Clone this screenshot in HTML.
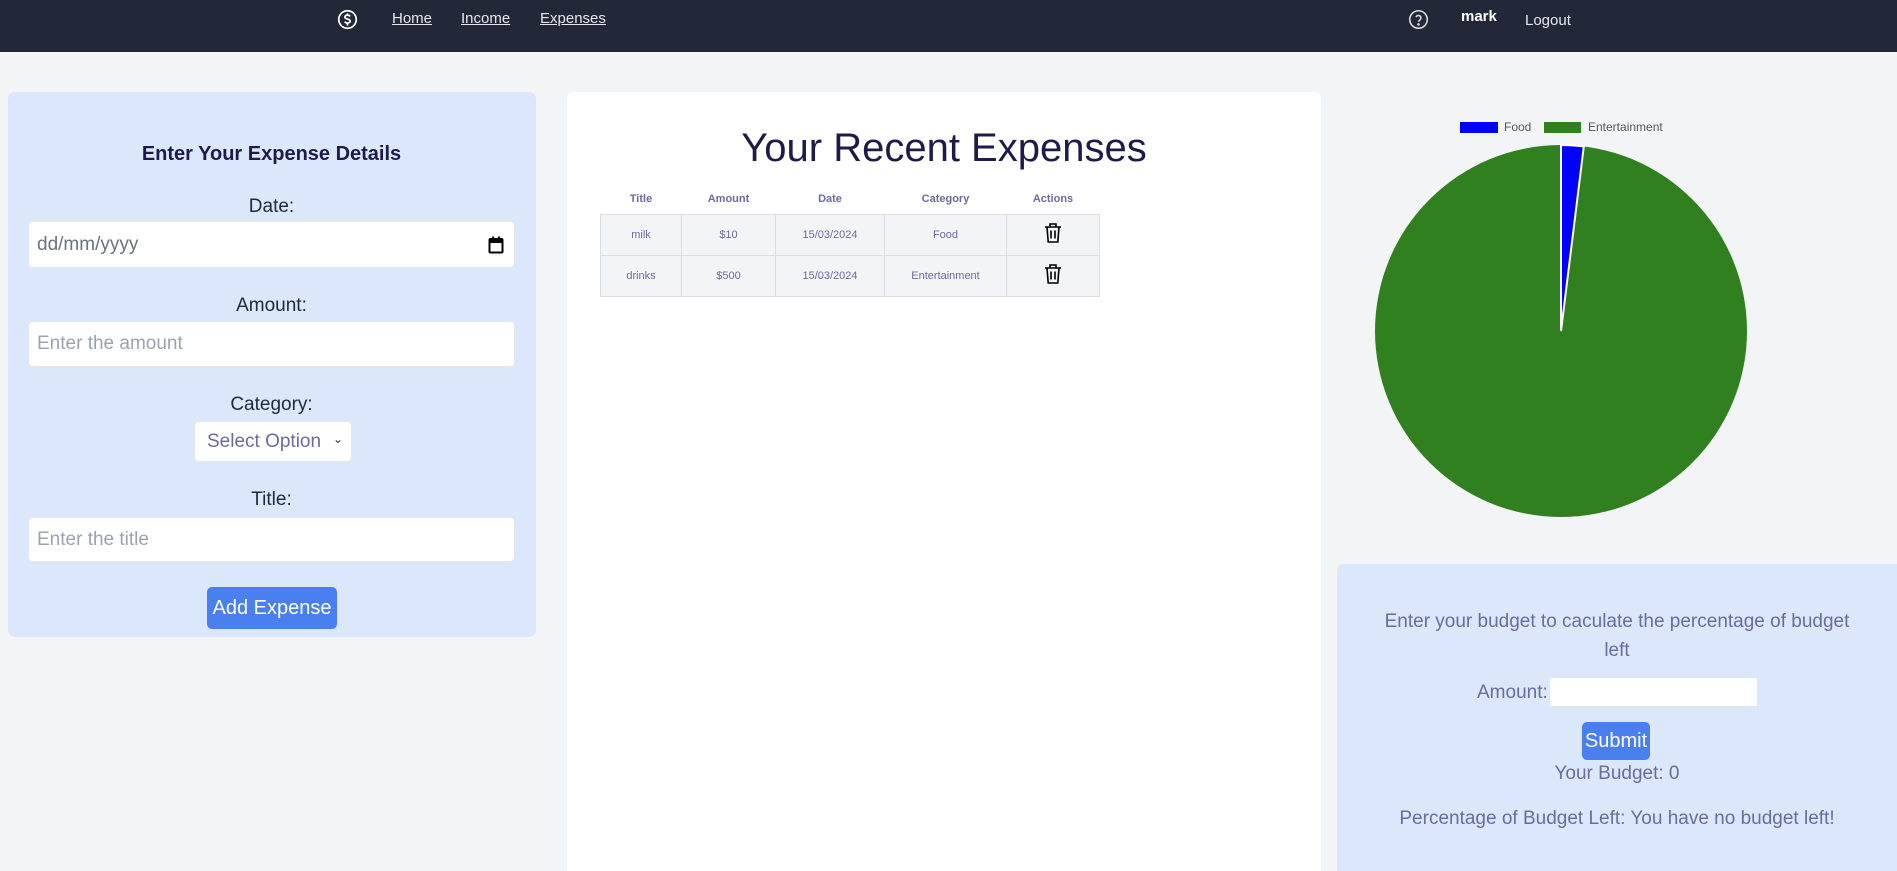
<!DOCTYPE html>
<html><head><meta charset="utf-8"><style>
*{box-sizing:border-box;margin:0;padding:0}
html,body{width:1897px;height:871px;overflow:hidden}
body{background:#f3f4f6;font-family:"Liberation Sans",Arial,sans-serif;position:relative}
.a{position:absolute}
.nav{left:0;top:0;width:1897px;height:52px;background:#222837}
.nl{color:#e5e7eb;font-size:15px;text-decoration:underline;top:10px}
.card{border-radius:7px}
.lbl{width:527px;left:0;text-align:center;font-size:19px;color:#1f2937}
.inp{background:#fff;border:1px solid #e5e7eb;border-radius:5px;font-size:19px;color:#9ca3af;padding-left:8px;display:flex;align-items:center}
th,td{text-align:center;color:#6b6b9e;font-size:11px}
th{font-weight:bold;height:30px}
td{border:1px solid #dcdee3;background:#f3f4f6;height:41px}
.bt{color:#6b6b9e;font-size:19px;text-align:center;width:560px;left:0}
</style></head><body>
<div class="a nav">
<svg class="a" style="left:337px;top:9px" width="21" height="21" viewBox="0 0 24 24" fill="none" stroke="#fff" stroke-width="2"><circle cx="12" cy="12" r="10"/><path d="M15 8.5c-.5-1-1.6-1.5-3-1.5-1.7 0-3 .9-3 2.2 0 3 6 1.6 6 4.6 0 1.3-1.3 2.2-3 2.2-1.5 0-2.6-.6-3.1-1.6M12 5v2M12 17v2"/></svg>
<div class="a nl" style="left:392px">Home</div>
<div class="a nl" style="left:461px">Income</div>
<div class="a nl" style="left:540px">Expenses</div>
<svg class="a" style="left:1408px;top:9px" width="21" height="21" viewBox="0 0 24 24" fill="none" stroke="#ddd" stroke-width="1.8"><circle cx="12" cy="12" r="10"/><path d="M9.2 9.3a2.9 2.9 0 0 1 5.6 1c0 2-2.8 2.6-2.8 4.3"/><circle cx="12" cy="17.6" r=".6" fill="#ddd"/></svg>
<div class="a" style="left:1461px;top:8px;color:#fff;font-size:15px;font-weight:bold">mark</div>
<div class="a" style="left:1525px;top:12px;color:#e5e7eb;font-size:15px">Logout</div>
</div>

<div class="a card" style="left:8px;top:92px;width:528px;height:545px;background:#dbe8fc">
<div class="a lbl" style="top:51px;font-weight:bold;font-size:20px;color:#1e1b4b">Enter Your Expense Details</div>
<div class="a lbl" style="top:104px">Date:</div>
<div class="a inp" style="left:20px;top:129px;width:487px;height:47px;color:#6b7280">dd/mm/yyyy
<svg class="a" style="right:10px;top:14px" width="16" height="18" viewBox="0 0 16 18"><rect x="1.5" y="3" width="13" height="13.5" rx="1" fill="none" stroke="#000" stroke-width="2"/><rect x="1.5" y="3" width="13" height="4" fill="#000"/><rect x="4" y="0.5" width="2" height="3" fill="#000"/><rect x="10" y="0.5" width="2" height="3" fill="#000"/></svg></div>
<div class="a lbl" style="top:203px">Amount:</div>
<div class="a inp" style="left:20px;top:229px;width:487px;height:46px">Enter the amount</div>
<div class="a lbl" style="top:302px">Category:</div>
<div class="a inp" style="left:186px;top:329px;width:158px;height:41px;color:#6b6b9e;padding-left:12px">Select Option<span class="a" style="right:8px;top:10px;font-size:12px;color:#333">&#8964;</span></div>
<div class="a lbl" style="top:397px">Title:</div>
<div class="a inp" style="left:20px;top:425px;width:487px;height:45px">Enter the title</div>
<div class="a" style="left:199px;top:495px;width:130px;height:42px;background:#4a7ff0;border-radius:5px;color:#fff;font-size:20px;display:flex;align-items:center;justify-content:center">Add Expense</div>
</div>

<div class="a card" style="left:567px;top:92px;width:754px;height:790px;background:#fff">
<div class="a" style="left:0;width:754px;top:34px;text-align:center;font-size:40px;color:#1e1b4b">Your Recent Expenses</div>
<table class="a" style="left:33px;top:92px;width:500px;border-collapse:collapse">
<tr><th style="width:81px">Title</th><th style="width:94px">Amount</th><th style="width:109px">Date</th><th style="width:122px">Category</th><th>Actions</th></tr>
<tr><td>milk</td><td>$10</td><td>15/03/2024</td><td>Food</td><td><svg width="20" height="22" viewBox="0 0 20 22" fill="none" stroke="#000" stroke-width="1.6"><path d="M2 5h16M7 5V2h6v3M4 5l1.2 15h9.6L16 5M8 8.5v8M12 8.5v8"/></svg></td></tr>
<tr><td>drinks</td><td>$500</td><td>15/03/2024</td><td>Entertainment</td><td><svg width="20" height="22" viewBox="0 0 20 22" fill="none" stroke="#000" stroke-width="1.6"><path d="M2 5h16M7 5V2h6v3M4 5l1.2 15h9.6L16 5M8 8.5v8M12 8.5v8"/></svg></td></tr>
</table>
</div>

<div class="a" style="left:1460px;top:122px;width:38px;height:11px;background:#0000ff"></div>
<div class="a" style="left:1504px;top:120px;font-size:12px;color:#555">Food</div>
<div class="a" style="left:1544px;top:122px;width:37px;height:11px;background:#318020"></div>
<div class="a" style="left:1588px;top:120px;font-size:12px;color:#555">Entertainment</div>
<svg class="a" style="left:1370px;top:140px" width="382" height="382" viewBox="-191 -191 382 382">
<circle r="186" fill="#318020"/>
<path d="M0 0 L0 -186 A186 186 0 0 1 22.8 -184.6 Z" fill="#0000ff" stroke="#fff" stroke-width="2"/>
</svg>

<div class="a card" style="left:1337px;top:564px;width:570px;height:320px;background:#dbe8fc">
<div class="a bt" style="top:43px;line-height:29px">Enter your budget to caculate the percentage of budget<br>left</div>
<div class="a" style="left:140px;top:118px;color:#6b6b9e;font-size:19px">Amount:</div>
<div class="a" style="left:213px;top:114px;width:207px;height:28px;background:#fff"></div>
<div class="a" style="left:245px;top:158px;width:68px;height:38px;background:#4a7ff0;border-radius:5px;color:#fff;font-size:20px;display:flex;align-items:center;justify-content:center">Submit</div>
<div class="a bt" style="top:199px">Your Budget: 0</div>
<div class="a bt" style="top:244px">Percentage of Budget Left: You have no budget left!</div>
</div>
</body></html>
